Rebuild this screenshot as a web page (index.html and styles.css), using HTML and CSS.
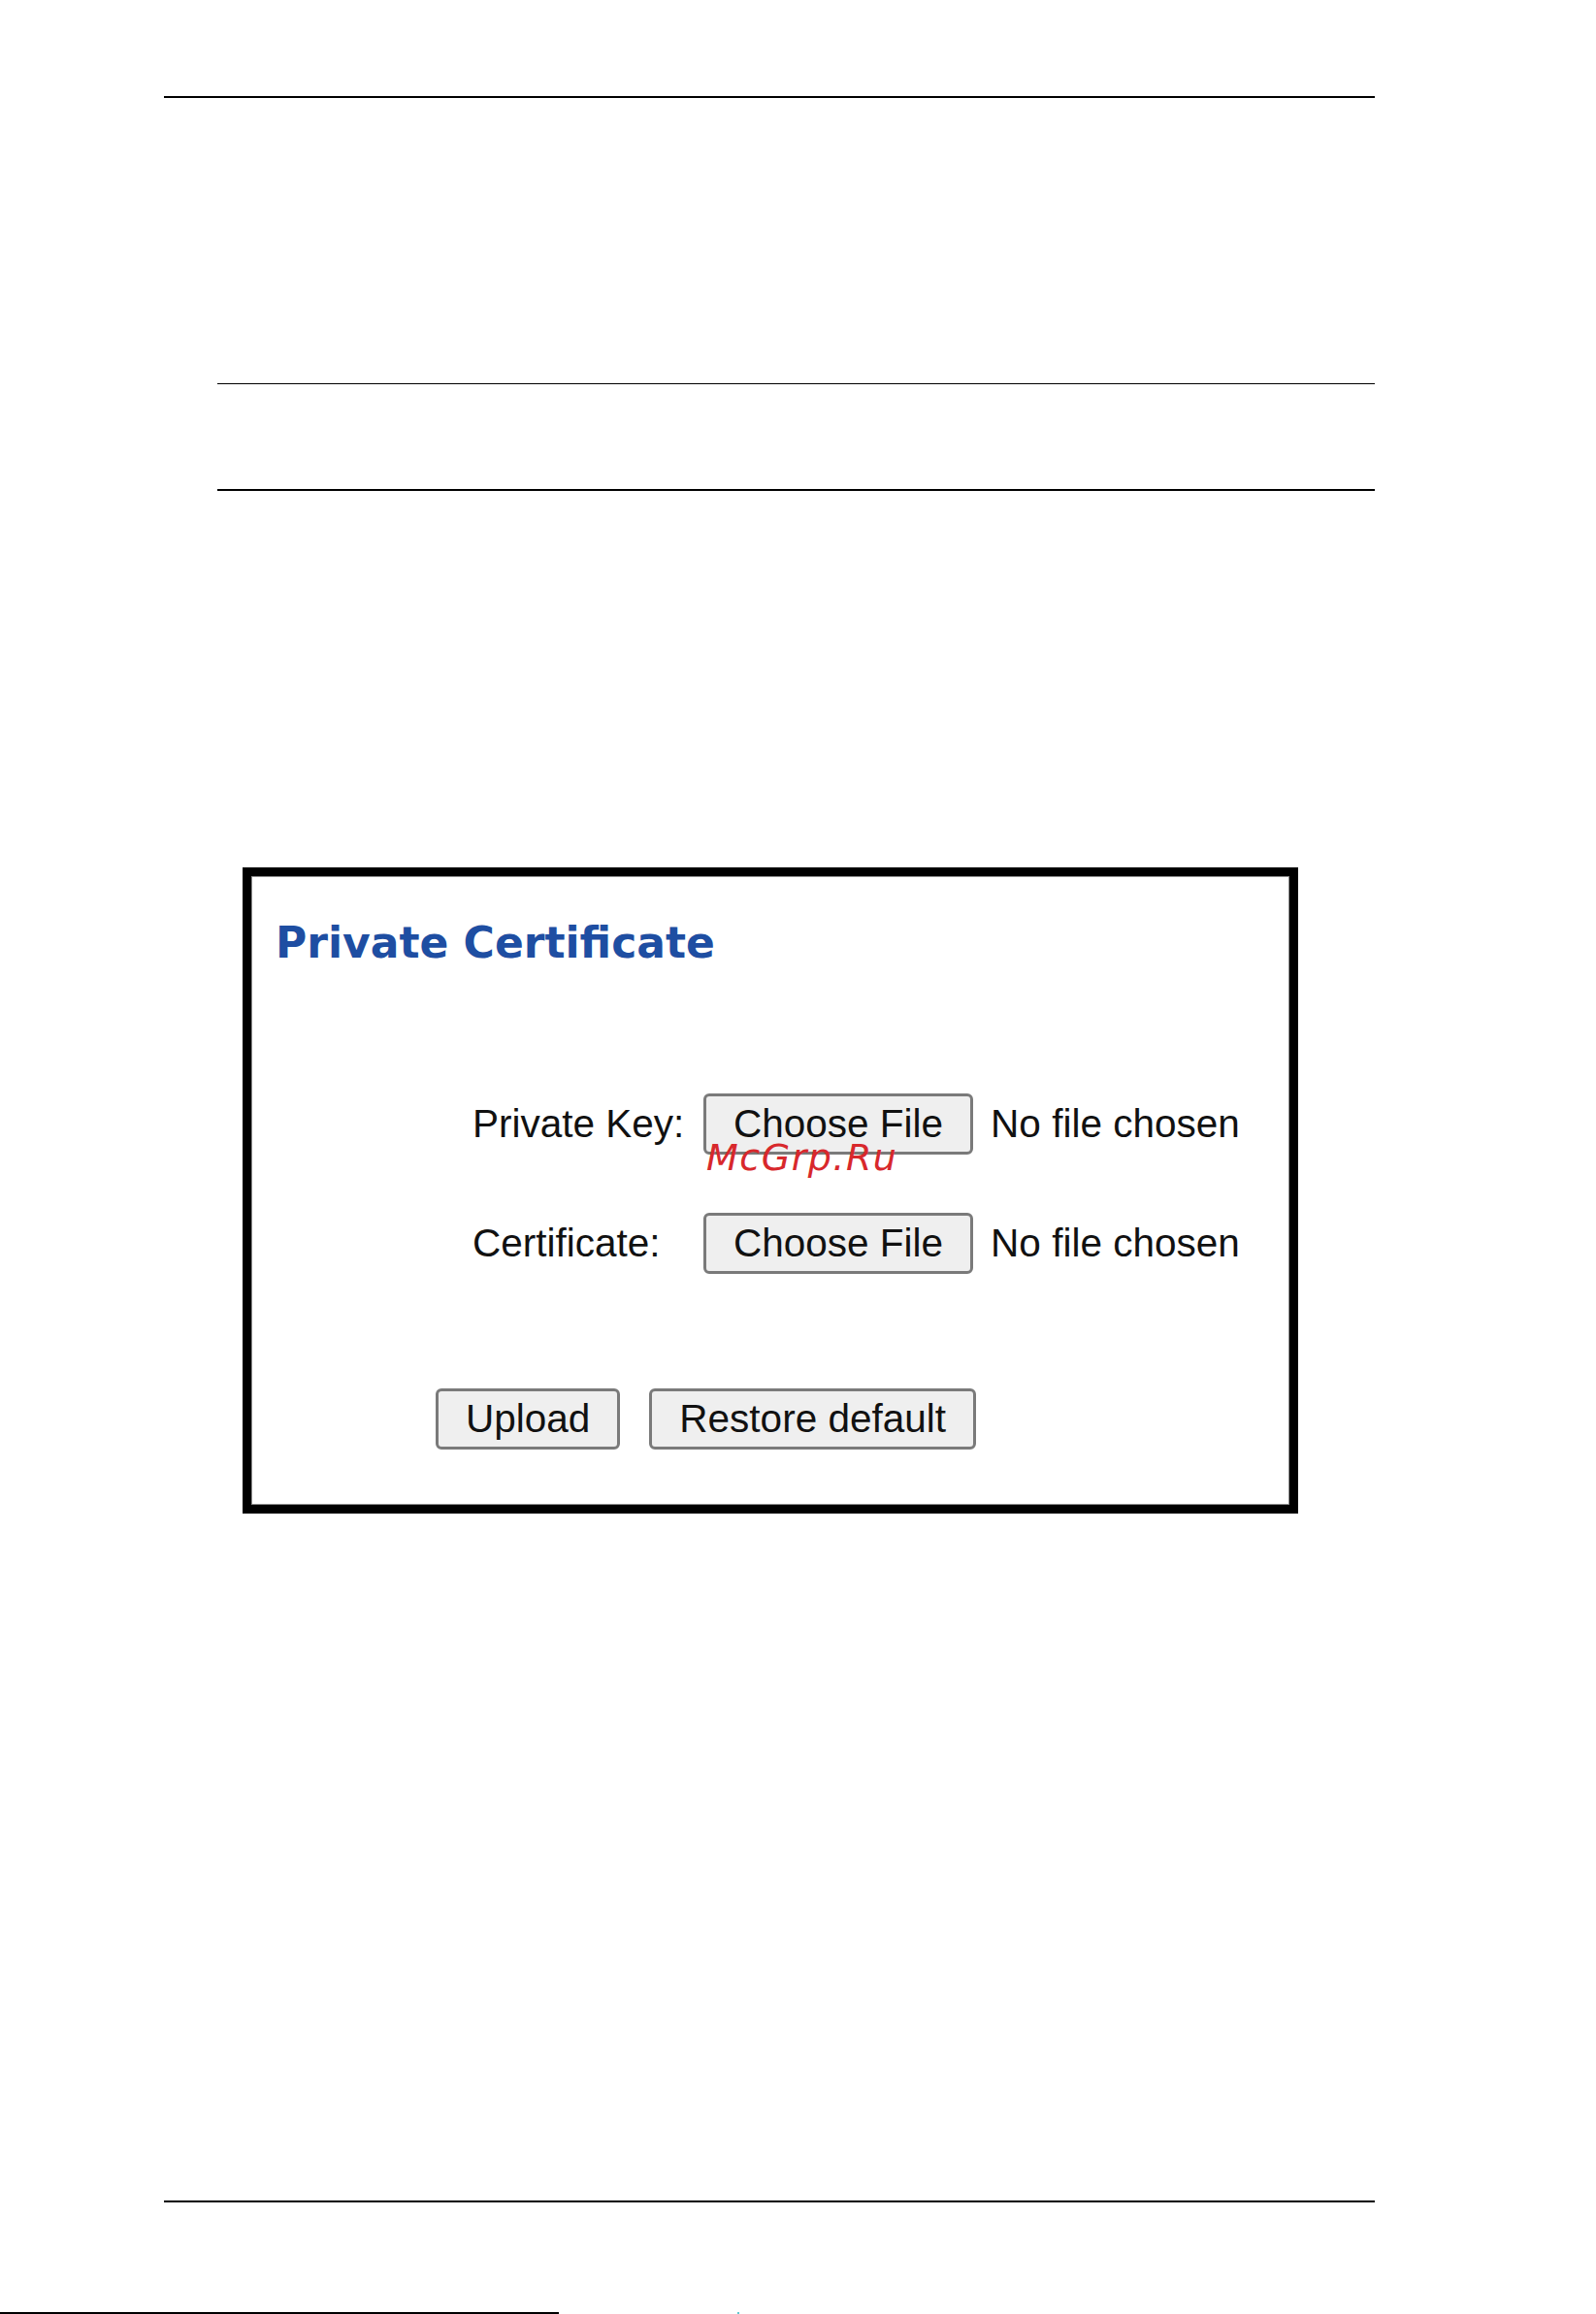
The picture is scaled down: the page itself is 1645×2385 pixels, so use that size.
FILE: index.html
```html
<!DOCTYPE html>
<html>
<head>
<meta http-equiv="Content-Type" content="text/html; charset=utf-8"/>
<title>Private Certificate</title>
<link rel="stylesheet" href="styles.css">
</head>
<body>
<div class="page">
  <div class="rule rule-head"></div>

  <div class="section">
    <div class="rule rule-thin"></div>
    <div class="rule rule-thick"></div>
  </div>

  <div class="shot">
    <h2 class="shot-title">Private Certificate</h2>

    <div class="cert-form">
      <div class="cert-row">
        <span class="cert-label">Private Key:</span>
        <button class="btn" type="button">Choose File</button>
        <span class="file-name">No file chosen</span>
      </div>
      <div class="cert-row">
        <span class="cert-label">Certificate:</span>
        <button class="btn" type="button">Choose File</button>
        <span class="file-name">No file chosen</span>
      </div>
    </div>

    <div class="cert-actions">
      <button class="btn" type="button">Upload</button>
      <button class="btn" type="button">Restore default</button>
    </div>

    <span class="stamp">McGrp.Ru</span>
  </div>

  <div class="rule rule-foot"></div>
</div>

<div class="scan-edge">
  <span class="scan-line"></span>
  <span class="scan-dot"></span>
</div>
</body>
</html>
```

FILE: styles.css
```css
html, body {
   margin: 0;
   padding: 0;
   background-color: white;
}

body {
   font-family: "Liberation Sans", Arial, sans-serif;
   color: #000;
}

.page {
   padding: 99px 228px 0 169px;
}

.rule {
   background-color: #000;
}

.rule-head {
   height: 2px;
}

.section {
   margin-left: 55px;
}

.rule-thin {
   height: 1px;
   margin-top: 294px;
}

.rule-thick {
   height: 2px;
   margin-top: 108px;
}

/* framed screenshot of the web form */
.shot {
   position: relative;
   box-sizing: border-box;
   width: 1088px;
   margin: 388px 0 0 81px;
   padding: 42px 0 57px 0;
   border: 9px solid #000;
   box-shadow: inset 0 0 0 1px #8c8c8c;
}

.shot-title {
   margin: 0 0 128px 0;
   padding-left: 25px;
   font-family: "DejaVu Sans", Verdana, sans-serif;
   font-weight: bold;
   font-size: 44px;
   line-height: 54px;
   color: #1e4ea2;
}

.cert-form {
   display: flex;
   flex-direction: column;
   gap: 60px;
   padding-left: 228px;
}

.cert-row {
   display: flex;
   align-items: baseline;
}

.cert-label {
   width: 238px;
   font-size: 40.5px;
   line-height: 45px;
   color: #111;
}

.file-name {
   margin-left: 18px;
   font-size: 40.5px;
   line-height: 45px;
   color: #111;
}

.btn {
   font-family: "Liberation Sans", Arial, sans-serif;
   font-size: 40.5px;
   line-height: 45px;
   color: #111;
   padding: 6px 28px;
   margin: 0;
   border: 3px solid #7a7a7a;
   border-radius: 6px;
   background-color: #efefef;
}

.cert-actions {
   display: flex;
   gap: 30px;
   margin-top: 118px;
   padding-left: 190px;
}

.stamp {
   position: absolute;
   left: 469px;
   top: 271px;
   font-family: "DejaVu Sans", sans-serif;
   font-style: oblique;
   font-size: 38px;
   line-height: 38px;
   letter-spacing: 1.5px;
   color: #d8282c;
}

.rule-foot {
   height: 2px;
   margin-top: 708px;
}

/* scanner edge along the bottom of the page */
.scan-edge {
   display: flex;
   align-items: flex-end;
   margin-top: 113px;
   height: 2px;
}

.scan-line {
   width: 576px;
   height: 2px;
   background-color: #000;
}

.scan-dot {
   width: 2px;
   height: 2px;
   margin-left: 184px;
   background-color: #5fc8d0;
}
```
